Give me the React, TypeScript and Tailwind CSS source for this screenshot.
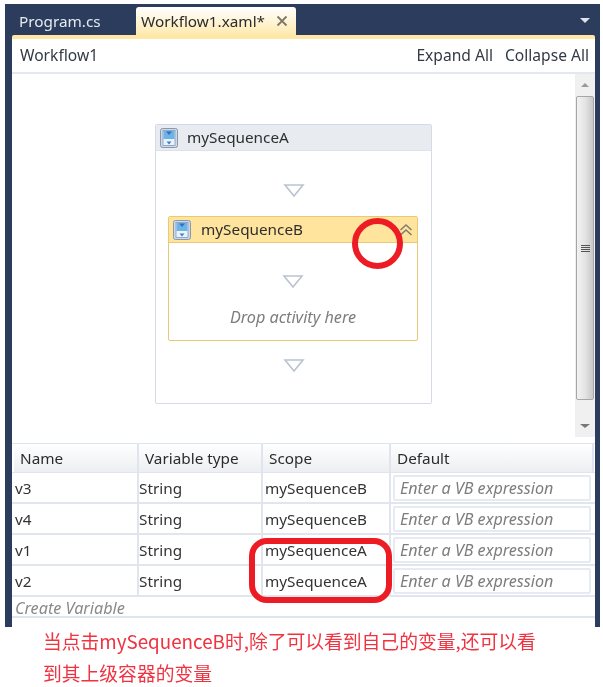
import type { ReactNode } from 'react';

const UI = "font-['Noto_Sans','Open_Sans',sans-serif]";

const rows = [
  { name: 'v3', scope: 'mySequenceB' },
  { name: 'v4', scope: 'mySequenceB' },
  { name: 'v1', scope: 'mySequenceA' },
  { name: 'v2', scope: 'mySequenceA' },
];

function SeqIcon() {
  return (
    <svg width="18" height="20" viewBox="0 0 18 20" className="shrink-0">
      <rect x="0.5" y="0.5" width="17" height="19" rx="2" fill="#cfd8e6" stroke="#8b97ab" />
      <rect x="3" y="2.5" width="12" height="15" fill="#e9f3fb" stroke="#7f9cc0" strokeWidth="0.8" />
      <rect x="3.5" y="3" width="11" height="8" fill="#6fb2e6" />
      <path d="M6 3.5h6L9 7z" fill="#2f6fc0" />
      <path d="M6.5 13.5h5L9 16.5z" fill="#3f7fcc" />
    </svg>
  );
}

function DropArrow({ className = '' }: { className?: string }) {
  return (
    <svg width="22" height="15" viewBox="0 0 22 15" className={className}>
      <path d="M2 2h18L11 13z" fill="#fff" stroke="#b9c3d2" strokeWidth="1.6" />
    </svg>
  );
}

function HeaderCell({ width, children }: { width: string; children: ReactNode }) {
  return (
    <div className={`${width} flex h-full items-center border-r-2 border-[#dfe5ee] bg-gradient-to-b from-white to-[#eceef1] pt-[1px] pl-[6px] text-[15.3px] text-[#2c2c2c]`}>
      {children}
    </div>
  );
}

export default function App() {
  return (
    <div className={`${UI} relative h-[687px] w-[603px] overflow-hidden bg-white pt-[4px] pl-[5px] blur-[0.4px]`}>
      <div className="flex h-[623px] w-[595px] flex-col bg-[#2b3c5c] pr-[5px] pl-[7px]">
        {/* tab strip */}
        <div className="flex h-[31px] items-end">
          <div className="flex h-[28px] w-[124px] items-center pl-[7px] text-[15.3px] text-[#e6e9ef]">Program.cs</div>
          <div className="flex h-[28px] w-[160px] items-center justify-between rounded-t-[3px] bg-gradient-to-b from-white to-[#ffe9ad] pr-[8px] pl-[5px] text-[15.3px] text-[#2b2b2b]">
            <span>Workflow1.xaml*</span>
            <svg width="12" height="12" viewBox="0 0 12 12">
              <path d="M1.5 1.5l9 9M10.5 1.5l-9 9" stroke="#7f7868" strokeWidth="1.8" />
            </svg>
          </div>
          <div className="flex h-full flex-1 items-center justify-end pt-[2px] pr-[5px]">
            <div className="h-0 w-0 border-x-[5px] border-t-[5px] border-x-transparent border-t-[#dfe3ea]" />
          </div>
        </div>
        <div className="h-[4px] rounded-t-[2px] bg-[#ffe8a6]" />

        {/* toolbar */}
        <div className="flex h-[35px] items-center justify-between border-b-2 border-[#e3e8f0] bg-white pt-[1px] pr-[6px] pl-[8px] text-[15.6px] text-[#333a45]">
          <span>Workflow1</span>
          <div className="flex gap-[12px]">
            <span>Expand All</span>
            <span>Collapse All</span>
          </div>
        </div>

        {/* canvas with scrollbar */}
        <div className="flex h-[363px] bg-white">
          <div className="flex flex-1 flex-col items-center pt-[50px]">
            <div className="flex h-[280px] w-[277px] flex-col rounded-[2px] border border-[#d5dbe5]">
              <div className="flex h-[26px] items-center gap-[9px] border-b border-[#dde2ea] bg-[#e8ebef] pl-[4px] text-[15.3px] text-[#2e2e2e]">
                <SeqIcon />
                <span>mySequenceA</span>
              </div>
              <DropArrow className="mt-[32px] self-center" />
              <div className="mt-[18px] mr-[13px] ml-[12px] flex h-[125px] flex-col rounded-[2px] border border-[#e9c975]">
                <div className="flex h-[26px] items-center gap-[10px] border-b border-[#e9c975] bg-[#ffe49d] pr-[4px] pl-[4px] text-[15.3px] text-[#2e2e2e]">
                  <SeqIcon />
                  <span className="flex-1">mySequenceB</span>
                  <svg width="14" height="14" viewBox="0 0 14 14">
                    <path d="M1.5 7l5.5-5 5.5 5M1.5 12l5.5-5 5.5 5" fill="none" stroke="#7f7c6e" strokeWidth="1.5" />
                  </svg>
                </div>
                <DropArrow className="mt-[31px] self-center" />
                <div className="mt-[16px] text-center text-[16.2px] text-[#7d7d7d] italic">Drop activity here</div>
              </div>
              <DropArrow className="mt-[17px] self-center" />
            </div>
          </div>

          <div className="flex w-[20px] flex-col items-center bg-[#f0f0f0]">
            <div className="flex h-[22px] items-center justify-center">
              <div className="h-0 w-0 border-x-[4px] border-b-[4px] border-x-transparent border-b-[#9a9a9a]" />
            </div>
            <div className="flex h-[304px] w-[18px] items-center justify-center rounded-[2px] border border-[#a6a6a6] bg-gradient-to-r from-[#f2f2f2] via-[#e4e4e4] to-[#c8c8c8]">
              <div className="flex w-[9px] flex-col gap-[1px]">
                <div className="h-[1px] bg-[#555]" />
                <div className="h-[1px] bg-[#555]" />
                <div className="h-[1px] bg-[#555]" />
                <div className="h-[1px] bg-[#555]" />
              </div>
            </div>
            <div className="flex flex-1 items-center justify-center pt-[14px]">
              <div className="h-0 w-0 border-x-[5px] border-t-[4px] border-x-transparent border-t-[#777]" />
            </div>
          </div>
        </div>

        {/* variables grid */}
        <div className="flex flex-1 flex-col bg-white pt-[6px]">
          <div className="flex h-[30px] items-stretch border-y border-[#dfe5ee] pl-[2px]">
            <div className="flex w-full items-center">
              <HeaderCell width="w-[125px]">Name</HeaderCell>
              <HeaderCell width="w-[124px]">Variable type</HeaderCell>
              <HeaderCell width="w-[128px]">Scope</HeaderCell>
              <HeaderCell width="w-[203px]">Default</HeaderCell>
            </div>
          </div>
          {rows.map((row) => (
            <div key={row.name} className="flex h-[31px] items-center border-b-2 border-[#e0e5ee] text-[15.3px] text-[#333]">
              <div className="flex h-full w-[127px] items-center border-r-2 border-[#e0e5ee] pt-[1px] pl-[3px]">{row.name}</div>
              <div className="flex h-full w-[124px] items-center border-r-2 border-[#e0e5ee] pt-[1px]">String</div>
              <div className="flex h-full w-[128px] items-center border-r-2 border-[#e0e5ee] pt-[1px] pl-[2px]">{row.scope}</div>
              <div className="flex h-full flex-1 items-center pr-[4px] pl-[2px]">
                <div className="flex h-[26px] w-[198px] items-center rounded-[2px] border-2 border-[#e6eaf1] pt-[1px] pl-[5px] text-[16.1px] text-[#7d7d7d] italic">
                  Enter a VB expression
                </div>
              </div>
            </div>
          ))}
          <div className="flex h-[21px] items-center border-b-2 border-[#dfe5ee] pt-[3px] pl-[3px] text-[16.2px] text-[#8a8a8a] italic">Create Variable</div>
        </div>
      </div>

      {/* caption */}
      <div className="-mt-[2px] w-[500px] pl-[38px] font-['Noto_Sans_CJK_SC','Noto_Sans',sans-serif] text-[18.8px] leading-[32px] text-[#ef3340]">
        <div className="w-[520px]">当点击mySequenceB时,除了可以看到自己的变量,还可以看</div>
        <div>到其上级容器的变量</div>
      </div>

      {/* hand-drawn red marks */}
      <div className="absolute top-[218px] left-[352px] h-[51px] w-[51px] rounded-full border-[6px] border-[#ed1c24]" />
      <div className="absolute top-[538px] left-[249px] h-[65px] w-[143px] rounded-[18px] border-[6px] border-[#ed1c24]" />
    </div>
  );
}
